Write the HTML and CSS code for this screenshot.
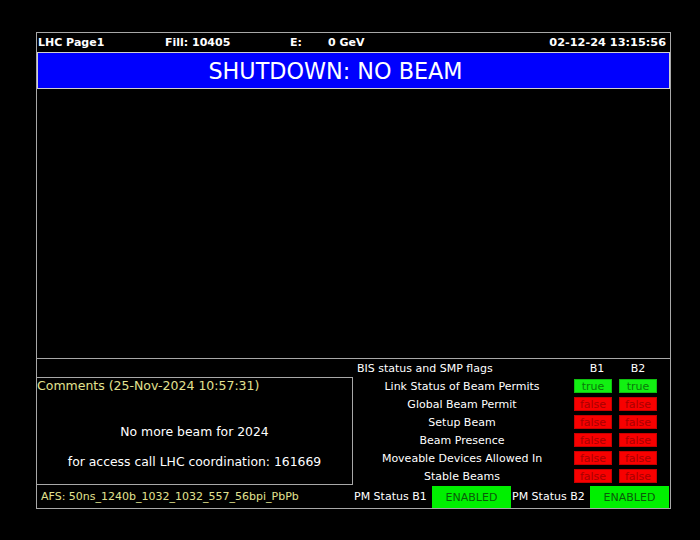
FILE: index.html
```html
<!DOCTYPE html>
<html>
<head>
<meta charset="utf-8">
<link rel="stylesheet" href="styles.css">
</head>
<body>
<div class="frame">
  <div class="header">
    <span class="h-page">LHC Page1</span>
    <span class="h-fill">Fill: 10405</span>
    <span class="h-e">E:</span>
    <span class="h-gev">0 GeV</span>
    <span class="h-date">02-12-24 13:15:56</span>
  </div>
  <div class="banner">SHUTDOWN: NO BEAM</div>
  <div class="main"></div>
  <div class="lower">
    <div class="left-col">
      <div class="spacer"></div>
      <div class="comments">
        <div class="c-title">Comments (25-Nov-2024 10:57:31)</div>
        <div class="c-msg">
          <div class="c-line">No more beam for 2024</div>
          <div class="c-line">for access call LHC coordination: 161669</div>
        </div>
      </div>
    </div>
    <div class="right-col">
      <div class="t-row t-head">
        <span class="t-title">BIS status and SMP flags</span>
        <span class="t-b1">B1</span>
        <span class="t-b2">B2</span>
      </div>
      <div class="t-row">
        <span class="t-label">Link Status of Beam Permits</span>
        <span class="badge ok b1">true</span>
        <span class="badge ok b2">true</span>
      </div>
      <div class="t-row">
        <span class="t-label">Global Beam Permit</span>
        <span class="badge bad b1">false</span>
        <span class="badge bad b2">false</span>
      </div>
      <div class="t-row">
        <span class="t-label">Setup Beam</span>
        <span class="badge bad b1">false</span>
        <span class="badge bad b2">false</span>
      </div>
      <div class="t-row">
        <span class="t-label">Beam Presence</span>
        <span class="badge bad b1">false</span>
        <span class="badge bad b2">false</span>
      </div>
      <div class="t-row">
        <span class="t-label">Moveable Devices Allowed In</span>
        <span class="badge bad b1">false</span>
        <span class="badge bad b2">false</span>
      </div>
      <div class="t-row">
        <span class="t-label">Stable Beams</span>
        <span class="badge bad b1">false</span>
        <span class="badge bad b2">false</span>
      </div>
    </div>
  </div>
  <div class="bottom">
    <div class="afs">AFS: 50ns_1240b_1032_1032_557_56bpi_PbPb</div>
    <div class="pm-label">PM Status B1</div>
    <div class="pm-box">ENABLED</div>
    <div class="pm-label">PM Status B2</div>
    <div class="pm-box">ENABLED</div>
  </div>
</div>
</body>
</html>
```

FILE: styles.css
```css
html, body {
  margin: 0;
  padding: 0;
  background: #000;
}
body {
  font-family: "DejaVu Sans", "Liberation Sans", sans-serif;
  color: #fff;
  width: 700px;
  height: 540px;
  overflow: hidden;
}
.frame {
  margin: 32px 0 0 36px;
  width: 633px;
  height: 475px;
  border: 1px solid #a8a8a8;
  display: flex;
  flex-direction: column;
}
.header {
  height: 19px;
  display: flex;
  align-items: center;
  font-size: 11px;
  font-weight: bold;
  padding-left: 1px;
  white-space: nowrap;
}
.h-page { width: 127px; }
.h-fill { width: 125px; }
.h-e { width: 38px; }
.h-gev { flex: 1; }
.h-date { padding-right: 4px; font-size: 11.3px; }
.banner {
  height: 35px;
  border: 1px solid #d0d0d0;
  background: #0000fe;
  display: flex;
  align-items: center;
  justify-content: center;
  padding-right: 36px;
  font-size: 22.3px;
  color: #fff;
}
.main {
  height: 269px;
  border-bottom: 1px solid #a8a8a8;
}
.lower {
  display: flex;
  height: 126px;
}
.left-col {
  width: 316px;
  display: flex;
  flex-direction: column;
}
.spacer { height: 18px; }
.comments {
  height: 106px;
  border-top: 1px solid #a8a8a8;
  border-right: 1px solid #a8a8a8;
  border-bottom: 1px solid #a8a8a8;
  display: flex;
  flex-direction: column;
}
.c-title {
  color: #e2e290;
  font-size: 12.5px;
  line-height: 16px;
  height: 16px;
  white-space: nowrap;
}
.c-msg {
  margin-top: 23px;
  text-align: center;
  font-size: 12.4px;
}
.c-line {
  line-height: 30px;
  height: 30px;
}
.right-col {
  flex: 1;
  display: flex;
  flex-direction: column;
}
.t-row {
  height: 18px;
  display: flex;
  align-items: center;
  font-size: 11px;
  white-space: nowrap;
}
.t-head { padding-top: 1px; box-sizing: border-box; }
.t-title {
  width: 214px;
  padding-left: 4px;
}
.t-b1 {
  margin-left: 3px;
  width: 30px;
  padding-left: 8px;
  text-align: center;
}
.t-b2 {
  margin-left: 7px;
  width: 38px;
  text-align: center;
}
.t-label {
  width: 218px;
  text-align: center;
  padding-top: 1px;
}
.badge {
  width: 38px;
  height: 14px;
  line-height: 15px;
  text-align: center;
  font-size: 11px;
  box-sizing: border-box;
}
.badge.b1 { margin-left: 3px; }
.badge.b2 { margin-left: 7px; }
.badge.ok {
  background: #12f012;
  color: #0a7a0a;
  box-shadow: inset 0 0 0 1px #10c010;
}
.badge.bad {
  background: #f80000;
  color: #a80000;
  box-shadow: inset 0 0 0 1px #c80000;
}
.bottom {
  height: 23px;
  display: flex;
  align-items: stretch;
  font-size: 11px;
  white-space: nowrap;
}
.afs {
  width: 312px;
  padding-left: 4px;
  color: #e2e290;
  display: flex;
  align-items: center;
}
.pm-label {
  width: 78px;
  padding-left: 1px;
  display: flex;
  align-items: center;
}
.pm-box {
  width: 79px;
  margin-top: 1px;
  background: #00f000;
  color: #0a5a0a;
  display: flex;
  align-items: center;
  justify-content: center;
}
```
